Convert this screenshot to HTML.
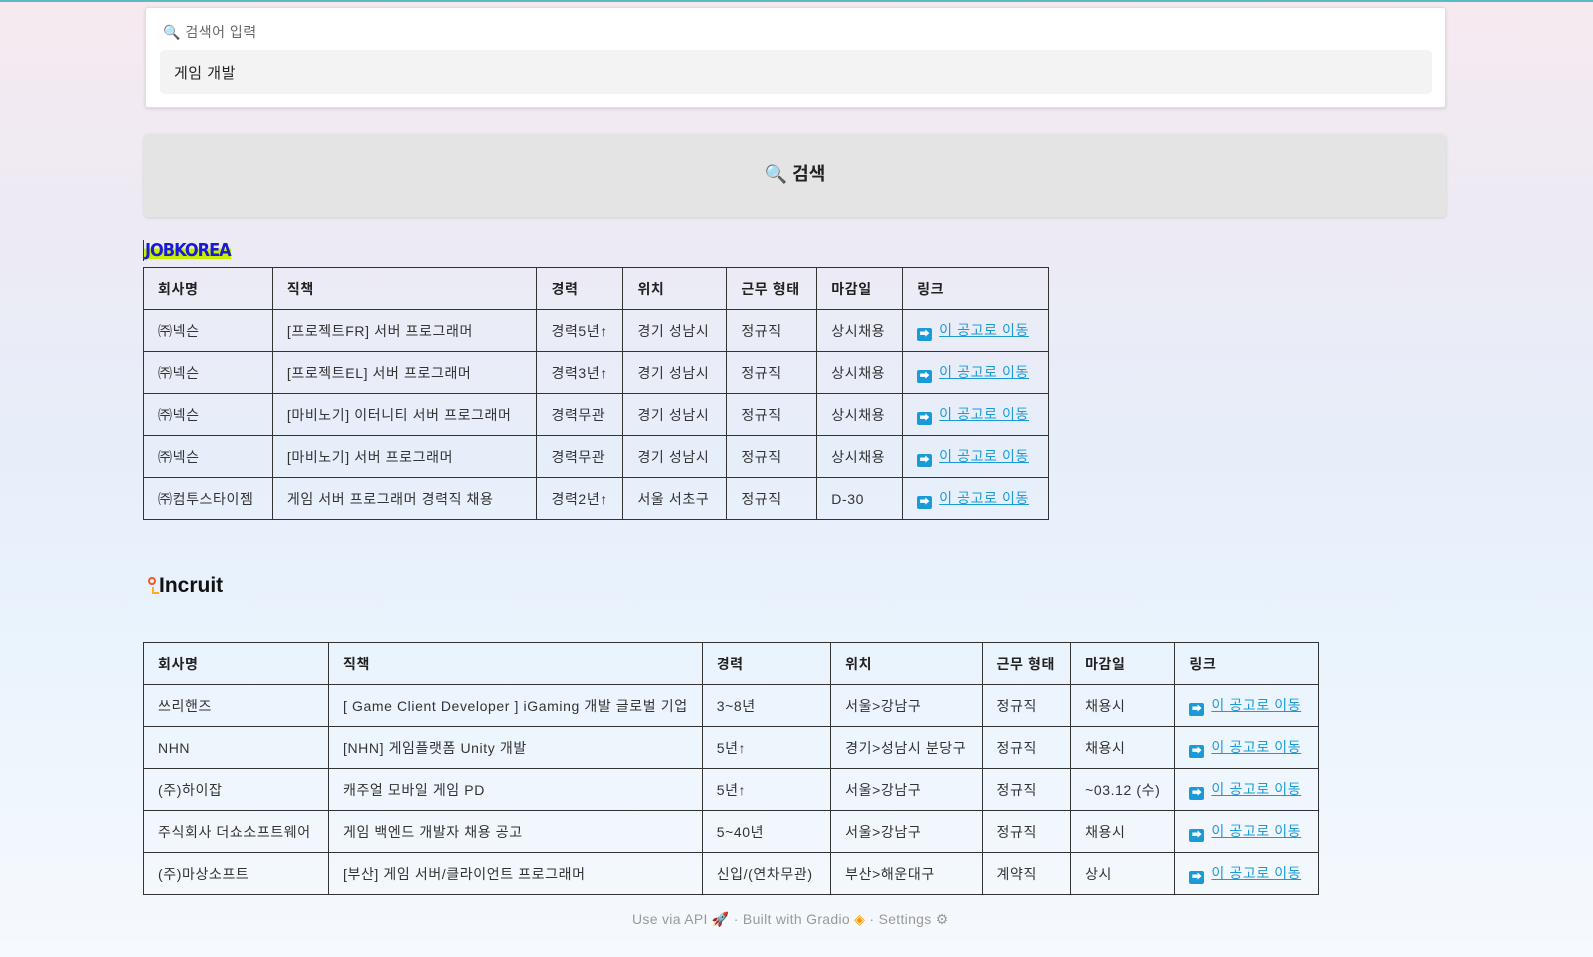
<!DOCTYPE html>
<html><head><meta charset="utf-8"><style>
*{box-sizing:border-box;margin:0;padding:0}
body{width:1593px;height:957px;overflow:hidden;font-family:"Liberation Sans","Noto Sans CJK KR",sans-serif;color:#222;
background:linear-gradient(180deg,#f6eaf0 0px,#eeeaf3 200px,#e6eefa 450px,#eaf4fd 650px,#f6f9fd 957px);border-top:2px solid #5bbcc0;position:relative}
.box{position:absolute;left:145px;top:5px;width:1301px;height:101px;background:#fff;border:1px solid #e2dde2;border-radius:3px;box-shadow:0 1px 3px rgba(0,0,0,.12)}
.lbl{position:absolute;left:17px;top:14px;font-size:14px;color:#666;letter-spacing:.5px}
.inp{position:absolute;left:14px;top:42px;width:1272px;height:44px;background:#f3f3f3;border-radius:4px;font-size:15px;padding:12px 14px;color:#222;letter-spacing:.5px}
.btn{position:absolute;left:144px;top:132px;width:1302px;height:83px;background:#e4e4e4;border-radius:4px;box-shadow:0 1px 3px rgba(0,0,0,.12);text-align:center;line-height:80px;font-size:18px;font-weight:bold}
table{position:absolute;border-collapse:collapse;font-size:14px;letter-spacing:.6px}
td,th{border:1px solid #333;height:42px;padding:0 14px;text-align:left;white-space:nowrap;color:#333;font-weight:normal}
th{font-weight:bold;color:#222}
a{color:#1a9bd7;text-decoration:underline}
.ic{display:inline-block;width:15px;height:13px;background:#1a9bd7;border-radius:2px;color:#fff;font-size:10px;line-height:13px;text-align:center;margin-right:7px;vertical-align:-2px;font-weight:bold;letter-spacing:0}
.foot{position:absolute;top:909px;left:632px;font-size:14px;color:#999;letter-spacing:.3px}
</style></head><body>
<div class="box"><div class="lbl">🔍 검색어 입력</div><div class="inp">게임 개발</div></div>
<div class="btn">🔍 검색</div>
<div style="position:absolute;left:143px;top:238px;font:bold 18px 'DejaVu Sans Condensed','Liberation Sans',sans-serif;color:#1a1ad8;background:linear-gradient(#fff0 40%,#c7f000 40%,#c7f000 90%,#fff0 90%);letter-spacing:-1px;border-left:1px solid #333;padding-left:1px">JOBKOREA</div>
<table style="left:143px;top:265px;width:906px">
<colgroup><col style="width:129px"><col style="width:265px"><col style="width:86px"><col style="width:104px"><col style="width:90px"><col style="width:86px"><col style="width:146px"></colgroup>
<tr><th>회사명</th><th>직책</th><th>경력</th><th>위치</th><th>근무 형태</th><th>마감일</th><th>링크</th></tr>
<tr><td>㈜넥슨</td><td>[프로젝트FR] 서버 프로그래머</td><td>경력5년↑</td><td>경기 성남시</td><td>정규직</td><td>상시채용</td><td><a><span class="ic">➡</span>이 공고로 이동</a></td></tr>
<tr><td>㈜넥슨</td><td>[프로젝트EL] 서버 프로그래머</td><td>경력3년↑</td><td>경기 성남시</td><td>정규직</td><td>상시채용</td><td><a><span class="ic">➡</span>이 공고로 이동</a></td></tr>
<tr><td>㈜넥슨</td><td>[마비노기] 이터니티 서버 프로그래머</td><td>경력무관</td><td>경기 성남시</td><td>정규직</td><td>상시채용</td><td><a><span class="ic">➡</span>이 공고로 이동</a></td></tr>
<tr><td>㈜넥슨</td><td>[마비노기] 서버 프로그래머</td><td>경력무관</td><td>경기 성남시</td><td>정규직</td><td>상시채용</td><td><a><span class="ic">➡</span>이 공고로 이동</a></td></tr>
<tr><td>㈜컴투스타이젬</td><td>게임 서버 프로그래머 경력직 채용</td><td>경력2년↑</td><td>서울 서초구</td><td>정규직</td><td>D-30</td><td><a><span class="ic">➡</span>이 공고로 이동</a></td></tr>
</table>
<div style="position:absolute;left:148px;top:572px;font:bold 21px 'Liberation Sans',sans-serif;color:#111"><span style="position:absolute;left:0;top:3px;width:8px;height:8px;border:2px solid #f05a28;border-radius:50%"></span><span style="position:absolute;left:4px;top:13px;width:7px;height:7px;border-left:2px solid #fbb117;border-bottom:2px solid #fbb117"></span><span style="margin-left:11px">Incruit</span></div>
<table style="left:143px;top:640px;width:1176px">
<colgroup><col style="width:189px"><col style="width:369px"><col style="width:133px"><col style="width:153px"><col style="width:90px"><col style="width:95px"><col style="width:147px"></colgroup>
<tr><th>회사명</th><th>직책</th><th>경력</th><th>위치</th><th>근무 형태</th><th>마감일</th><th>링크</th></tr>
<tr><td>쓰리핸즈</td><td>[ Game Client Developer ] iGaming 개발 글로벌 기업</td><td>3~8년</td><td>서울&gt;강남구</td><td>정규직</td><td>채용시</td><td><a><span class="ic">➡</span>이 공고로 이동</a></td></tr>
<tr><td>NHN</td><td>[NHN] 게임플랫폼 Unity 개발</td><td>5년↑</td><td>경기&gt;성남시 분당구</td><td>정규직</td><td>채용시</td><td><a><span class="ic">➡</span>이 공고로 이동</a></td></tr>
<tr><td>(주)하이잡</td><td>캐주얼 모바일 게임 PD</td><td>5년↑</td><td>서울&gt;강남구</td><td>정규직</td><td>~03.12 (수)</td><td><a><span class="ic">➡</span>이 공고로 이동</a></td></tr>
<tr><td>주식회사 더쇼소프트웨어</td><td>게임 백엔드 개발자 채용 공고</td><td>5~40년</td><td>서울&gt;강남구</td><td>정규직</td><td>채용시</td><td><a><span class="ic">➡</span>이 공고로 이동</a></td></tr>
<tr><td>(주)마상소프트</td><td>[부산] 게임 서버/클라이언트 프로그래머</td><td>신입/(연차무관)</td><td>부산&gt;해운대구</td><td>계약직</td><td>상시</td><td><a><span class="ic">➡</span>이 공고로 이동</a></td></tr>
</table>
<div class="foot">Use via API <span style="color:#f07c2a">🚀</span> · Built with Gradio <span style="color:#f90">◈</span> · Settings ⚙</div>
</body></html>
